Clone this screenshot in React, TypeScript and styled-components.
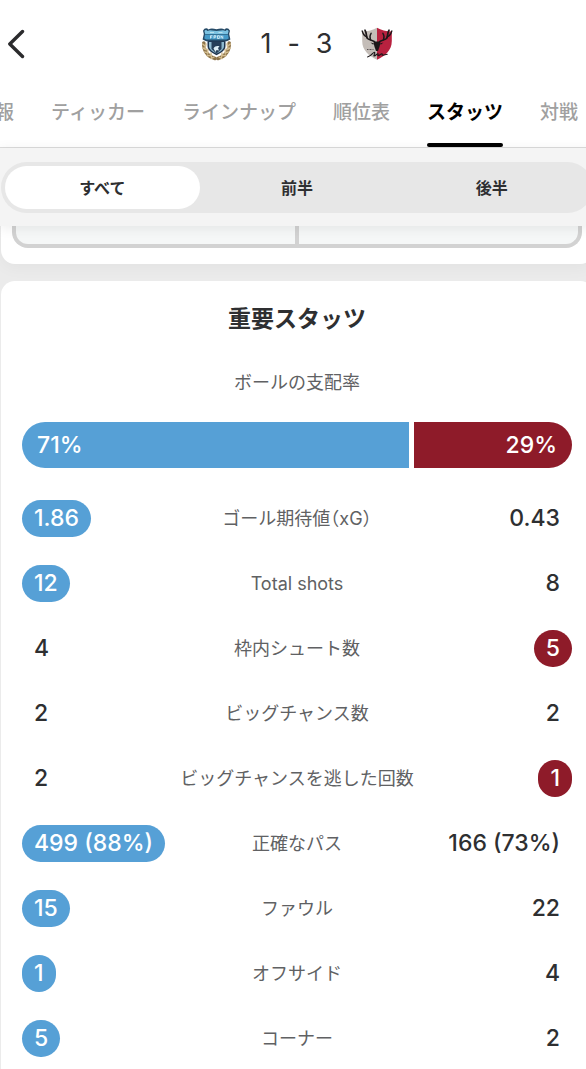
import React, { useState } from "react";
import styled, { createGlobalStyle } from "styled-components";

const HOME = "#56a0d6";
const AWAY = "#8e1b29";
const INK = "#2e2f31";

const GlobalStyle = createGlobalStyle`
  * { box-sizing: border-box; }
  body {
    margin: 0;
    overflow-x: hidden;
    background: #ebebeb;
    color: ${INK};
    font-family: Inter, "Noto Sans CJK JP", sans-serif;
  }
  button { font: inherit; color: inherit; border: 0; background: none; padding: 0; cursor: pointer; }
`;

const Viewport = styled.div`
  overflow: hidden;
`;

const Screen = styled.div`
  width: calc(100% + 8px);
`;

const Header = styled.header`
  display: grid;
  grid-template-columns: 1fr auto 1fr;
  align-items: center;
  height: 88px;
  padding: 0 8px;
  background: #fff;
`;

const BackButton = styled.button`
  display: flex;
  justify-self: start;
`;

const Scoreline = styled.div`
  display: flex;
  align-items: center;
  gap: 28px;
`;

const Score = styled.h1`
  display: flex;
  justify-content: center;
  gap: 16px;
  margin: 0;
  min-width: 72px;
  font-size: 27px;
  line-height: 32px;
  font-weight: 400;
`;

const Tabs = styled.nav`
  display: flex;
  gap: 37px;
  height: 60px;
  padding-top: 9px;
  overflow: hidden;
  background: #fff;
  border-bottom: 1px solid #dcdcdc;
`;

const Tab = styled.a<{ $active?: boolean }>`
  flex: none;
  display: flex;
  flex-direction: column;
  justify-content: space-between;
  font-size: 19px;
  line-height: 32px;
  font-weight: ${(p) => (p.$active ? 700 : 500)};
  color: ${(p) => (p.$active ? "#000" : "#a0a0a0")};
  text-decoration: none;

  &:first-child { margin-left: -5px; }
  &::after {
    content: "";
    height: 4px;
    border-radius: 2px;
    background: ${(p) => (p.$active ? "#000" : "transparent")};
  }
`;

const FilterBar = styled.div`
  position: relative;
  padding: 14px 1px 13px;
  background: #f4f4f4;
  box-shadow: 0 2px 12px rgba(0, 0, 0, 0.08);
`;

const Segments = styled.div`
  display: grid;
  grid-template-columns: repeat(3, 1fr);
  padding: 4px;
  border-radius: 26px;
  background: #e7e7e7;
`;

const Segment = styled.button<{ $active: boolean }>`
  && {
    height: 43px;
    padding-bottom: 2px;
    border-radius: 22px;
    background: ${(p) => (p.$active ? "#fff" : "transparent")};
    font-size: 16px;
    font-weight: 700;
  }
`;

const PitchCard = styled.section`
  padding: 0 12px 16px 11px;
  margin-left: 1px;
  border-radius: 0 0 14px 14px;
  background: #fff;
  box-shadow: 0 4px 16px rgba(0, 0, 0, 0.04);
`;

const Pitch = styled.div`
  display: grid;
  grid-template-columns: 1fr 1fr;
  height: 22px;
  border: 4px solid #d2d2d2;
  border-top: 0;
  border-radius: 0 0 16px 16px;
  background: #f5f7f7;
`;

const PitchHalf = styled.div`
  & + & {
    border-left: 4px solid #d2d2d2;
    margin-left: -2px;
  }
`;

const StatsCard = styled.section`
  margin: 17px 0 0 1px;
  padding: 21px 22px 14px 21px;
  border-radius: 14px;
  background: #fff;
`;

const Title = styled.h2`
  margin: 0;
  text-align: center;
  font-size: 23px;
  line-height: 34px;
  font-weight: 700;
`;

const Possession = styled.div`
  padding-top: 34px;
  text-align: center;
`;

const PossessionLabel = styled.h3`
  margin: 0 0 26px;
  font-size: 18px;
  line-height: 26px;
  font-weight: 400;
  color: #606163;
`;

const PossessionBar = styled.div<{ $home: number; $away: number }>`
  display: grid;
  grid-template-columns: ${(p) => p.$home}fr ${(p) => p.$away}fr;
  gap: 5px;
  border-radius: 23px;
  overflow: hidden;
`;

const Share = styled.div<{ $side: "home" | "away" }>`
  padding: 0 15px;
  text-align: ${(p) => (p.$side === "home" ? "left" : "right")};
  background: ${(p) => (p.$side === "home" ? HOME : AWAY)};
  color: #fff;
  font-size: 23px;
  line-height: 46px;
  font-weight: 500;
`;

const StatTable = styled.table`
  width: 100%;
  margin-top: 18px;
  border-collapse: collapse;
  table-layout: fixed;
`;

const StatRow = styled.tr`
  height: 65px;
`;

const ValueCell = styled.td<{ $align: "left" | "right" }>`
  width: 28%;
  padding: 0;
  text-align: ${(p) => p.$align};
`;

const LabelCell = styled.th`
  padding: 0;
  text-align: center;
  white-space: nowrap;
  font-size: 18px;
  line-height: 26px;
  font-weight: 400;
  font-feature-settings: "halt";
  color: #606163;
`;

const Value = styled.span<{ $fill?: string }>`
  display: inline-block;
  vertical-align: middle;
  padding: 0 12px;
  border-radius: 19px;
  background: ${(p) => p.$fill ?? "transparent"};
  color: ${(p) => (p.$fill ? "#fff" : INK)};
  white-space: nowrap;
  font-size: 23px;
  line-height: 37px;
  font-weight: 500;
`;

const HomeCrest = () => (
  <svg width="31" height="34" viewBox="0 0 31 34" role="img" aria-label="川崎フロンターレ">
    <g fill="none" stroke="#8d7348" strokeWidth="3.6" strokeLinecap="round">
      <path d="M2.8 16C2.6 23 6 29.5 14 31.5" />
      <path d="M28.2 16C28.4 23 25 29.5 17 31.5" />
    </g>
    <g fill="none" stroke="#d3bd90" strokeWidth="1.4" strokeLinecap="round">
      <path d="M1.6 17l3 2.4M1.8 21l3.6 1.8M3.6 25l3.6.8M6.4 28.8l3.4-.6M10 31.6l3-1.6M5 17l-1.2 5M7 22l-.6 5M10 26l.4 4" />
      <path d="M29.4 17l-3 2.4M29.2 21l-3.6 1.8M27.4 25l-3.6.8M24.6 28.8l-3.4-.6M21 31.6l-3-1.6M26 17l1.2 5M24 22l.6 5M21 26l-.4 4" />
    </g>
    <path d="M6.500 12.500h18v6.500c0 3.800-4 7-9 9.200-5-2.200-9-5.400-9-9.200z" fill="#20364f" />
    <path d="M8 15h15v4c0 3.200-3.200 5.600-7.500 7.500C11.200 24.600 8 22.200 8 19z" fill="#8db9cf" />
    <path d="M10.500 15h10v7l-5 4.500-5-4.500z" fill="#263f59" />
    <path d="M12.500 21.500c1.500-2.500 4-3 6-2l-1.500 1.500 1 2.500-2.500-.5-1 2z" fill="#dceef5" />
    <path d="M2 3.800C3.300.8 6 .6 7.400 2.400 9.500 1 12 1.200 15.500 2.200 19 1.200 21.500 1 23.600 2.400 25 .6 27.700.8 29 3.800L28.200 7l1.200 5.500-3.600 1.700H5.200l-3.600-1.700L2.800 7z" fill="#254a67" />
    <path d="M3.400 4C4.200 2.500 5.600 2.500 6.400 4L9 3.200l6.500.8 6.500-.8 2.600.8c.8-1.500 2.200-1.500 3 0l-.8 3H4.200z" fill="#7cc3e2" />
    <path d="M4 7.500h23l.7 4-2.200 1h-20l-2.200-1z" fill="#459ac8" />
    <path d="M9.500 11.500V8.700h2M9.500 10.100h1.600M13 11.500V8.700h1.800v1.500H13M16.500 8.700h1.800v2.800h-1.800zM20 11.500V8.700l1.800 2.800V8.700" fill="none" stroke="#e2f2f8" strokeWidth=".8" />
    <path d="M9 5.500h4M17.500 5.500h4" stroke="#b9e0ee" strokeWidth="1" />
  </svg>
);

const AwayCrest = () => (
  <svg width="32" height="34" viewBox="0 0 32 34" role="img" aria-label="鹿島アントラーズ">
    <path d="M16 .8v32C8 29 1.200 23.500 1.200 14V4.500C7 4.500 12 3 16 .8z" fill="#c4bdb8" />
    <path d="M16 .8v32C24 29 30.800 23.500 30.800 14V4.500C25 4.500 20 3 16 .8z" fill="#b8213f" />
    <g fill="none" stroke="#1c1719" strokeLinecap="round" strokeLinejoin="round">
      <path d="M14.500 16C13 12.500 9 14 6.500 11.500 4.800 9.500 6 6 4 3.200" strokeWidth="1.700" />
      <path d="M17.500 16c1.500-3.500 5.500-2 8-4.500 1.700-2 .5-5.500 2.500-8.300" strokeWidth="1.700" />
      <path d="M6 10C3.800 9.200 2 7 1.200 4M9.500 12.800C8.500 10.500 9 8 10.200 6.200M26 10c2.200-.8 4-3 4.800-6M22.500 12.800c1-2.300.5-4.800-.7-6.600" strokeWidth="1.300" />
      <path d="M6.500 30c4-.5 5.500-5 7-4.800 1.200.4-1.500 4-.3 3.800 1.600-.2 2.600-2.400 3.800-2.200.8.3-.8 1.900.3 1.900 1.300 0 2.200-1.700 3.600-1.900 1.200 0-.6 1.600.8 1.500l4.500-1" strokeWidth="1.100" />
    </g>
    <path d="M12.500 15.500l2-1h3l2 1-1 4.200-1.500 4.300h-2l-1.500-4.300z" fill="#1c1719" />
    <path d="M9.500 15.500l3.500 1-.8 1.300zM22.500 15.500l-3.500 1 .8 1.300z" fill="#1c1719" />
    <path d="M6 22.500h6.500" stroke="#5b5355" strokeWidth="1" strokeDasharray="1 .5" />
  </svg>
);

const TABS = ["報", "ティッカー", "ラインナップ", "順位表", "スタッツ", "対戦"];
const PERIODS = ["すべて", "前半", "後半"];

type Stat = { label: string; home: string; away: string; lead?: "home" | "away" };

const STATS: Stat[] = [
  { label: "ゴール期待値（xG）", home: "1.86", away: "0.43", lead: "home" },
  { label: "Total shots", home: "12", away: "8", lead: "home" },
  { label: "枠内シュート数", home: "4", away: "5", lead: "away" },
  { label: "ビッグチャンス数", home: "2", away: "2" },
  { label: "ビッグチャンスを逃した回数", home: "2", away: "1", lead: "away" },
  { label: "正確なパス", home: "499 (88%)", away: "166 (73%)", lead: "home" },
  { label: "ファウル", home: "15", away: "22", lead: "home" },
  { label: "オフサイド", home: "1", away: "4", lead: "home" },
  { label: "コーナー", home: "5", away: "2", lead: "home" },
];

export default function App() {
  const [period, setPeriod] = useState(PERIODS[0]);

  return (
    <Viewport>
      <GlobalStyle />
      <Screen lang="ja">
        <Header>
          <BackButton type="button" aria-label="戻る">
            <svg width="18" height="30" viewBox="0 0 18 30" fill="none" stroke="#2b2b2d" strokeWidth="3.4" strokeLinecap="round" strokeLinejoin="round">
              <path d="M14.500 2.500L1.800 15l12.700 12.500" />
            </svg>
          </BackButton>
          <Scoreline>
            <HomeCrest />
            <Score>
              <span>1</span>
              <span>-</span>
              <span>3</span>
            </Score>
            <AwayCrest />
          </Scoreline>
        </Header>

        <Tabs>
          {TABS.map((tab) => (
            <Tab key={tab} href="#" $active={tab === "スタッツ"} aria-current={tab === "スタッツ" ? "page" : undefined}>
              {tab}
            </Tab>
          ))}
        </Tabs>

        <FilterBar>
          <Segments>
            {PERIODS.map((name) => (
              <Segment key={name} type="button" $active={name === period} aria-pressed={name === period} onClick={() => setPeriod(name)}>
                {name}
              </Segment>
            ))}
          </Segments>
        </FilterBar>

        <main>
          <PitchCard>
            <Pitch>
              <PitchHalf />
              <PitchHalf />
            </Pitch>
          </PitchCard>

          <StatsCard>
            <Title>重要スタッツ</Title>
            <Possession>
              <PossessionLabel>ボールの支配率</PossessionLabel>
              <PossessionBar $home={71} $away={29}>
                <Share $side="home">71%</Share>
                <Share $side="away">29%</Share>
              </PossessionBar>
            </Possession>
            <StatTable>
              <tbody>
                {STATS.map((stat) => (
                  <StatRow key={stat.label}>
                    <ValueCell $align="left">
                      <Value $fill={stat.lead === "home" ? HOME : undefined}>{stat.home}</Value>
                    </ValueCell>
                    <LabelCell scope="row">{stat.label}</LabelCell>
                    <ValueCell $align="right">
                      <Value $fill={stat.lead === "away" ? AWAY : undefined}>{stat.away}</Value>
                    </ValueCell>
                  </StatRow>
                ))}
              </tbody>
            </StatTable>
          </StatsCard>
        </main>
      </Screen>
    </Viewport>
  );
}
